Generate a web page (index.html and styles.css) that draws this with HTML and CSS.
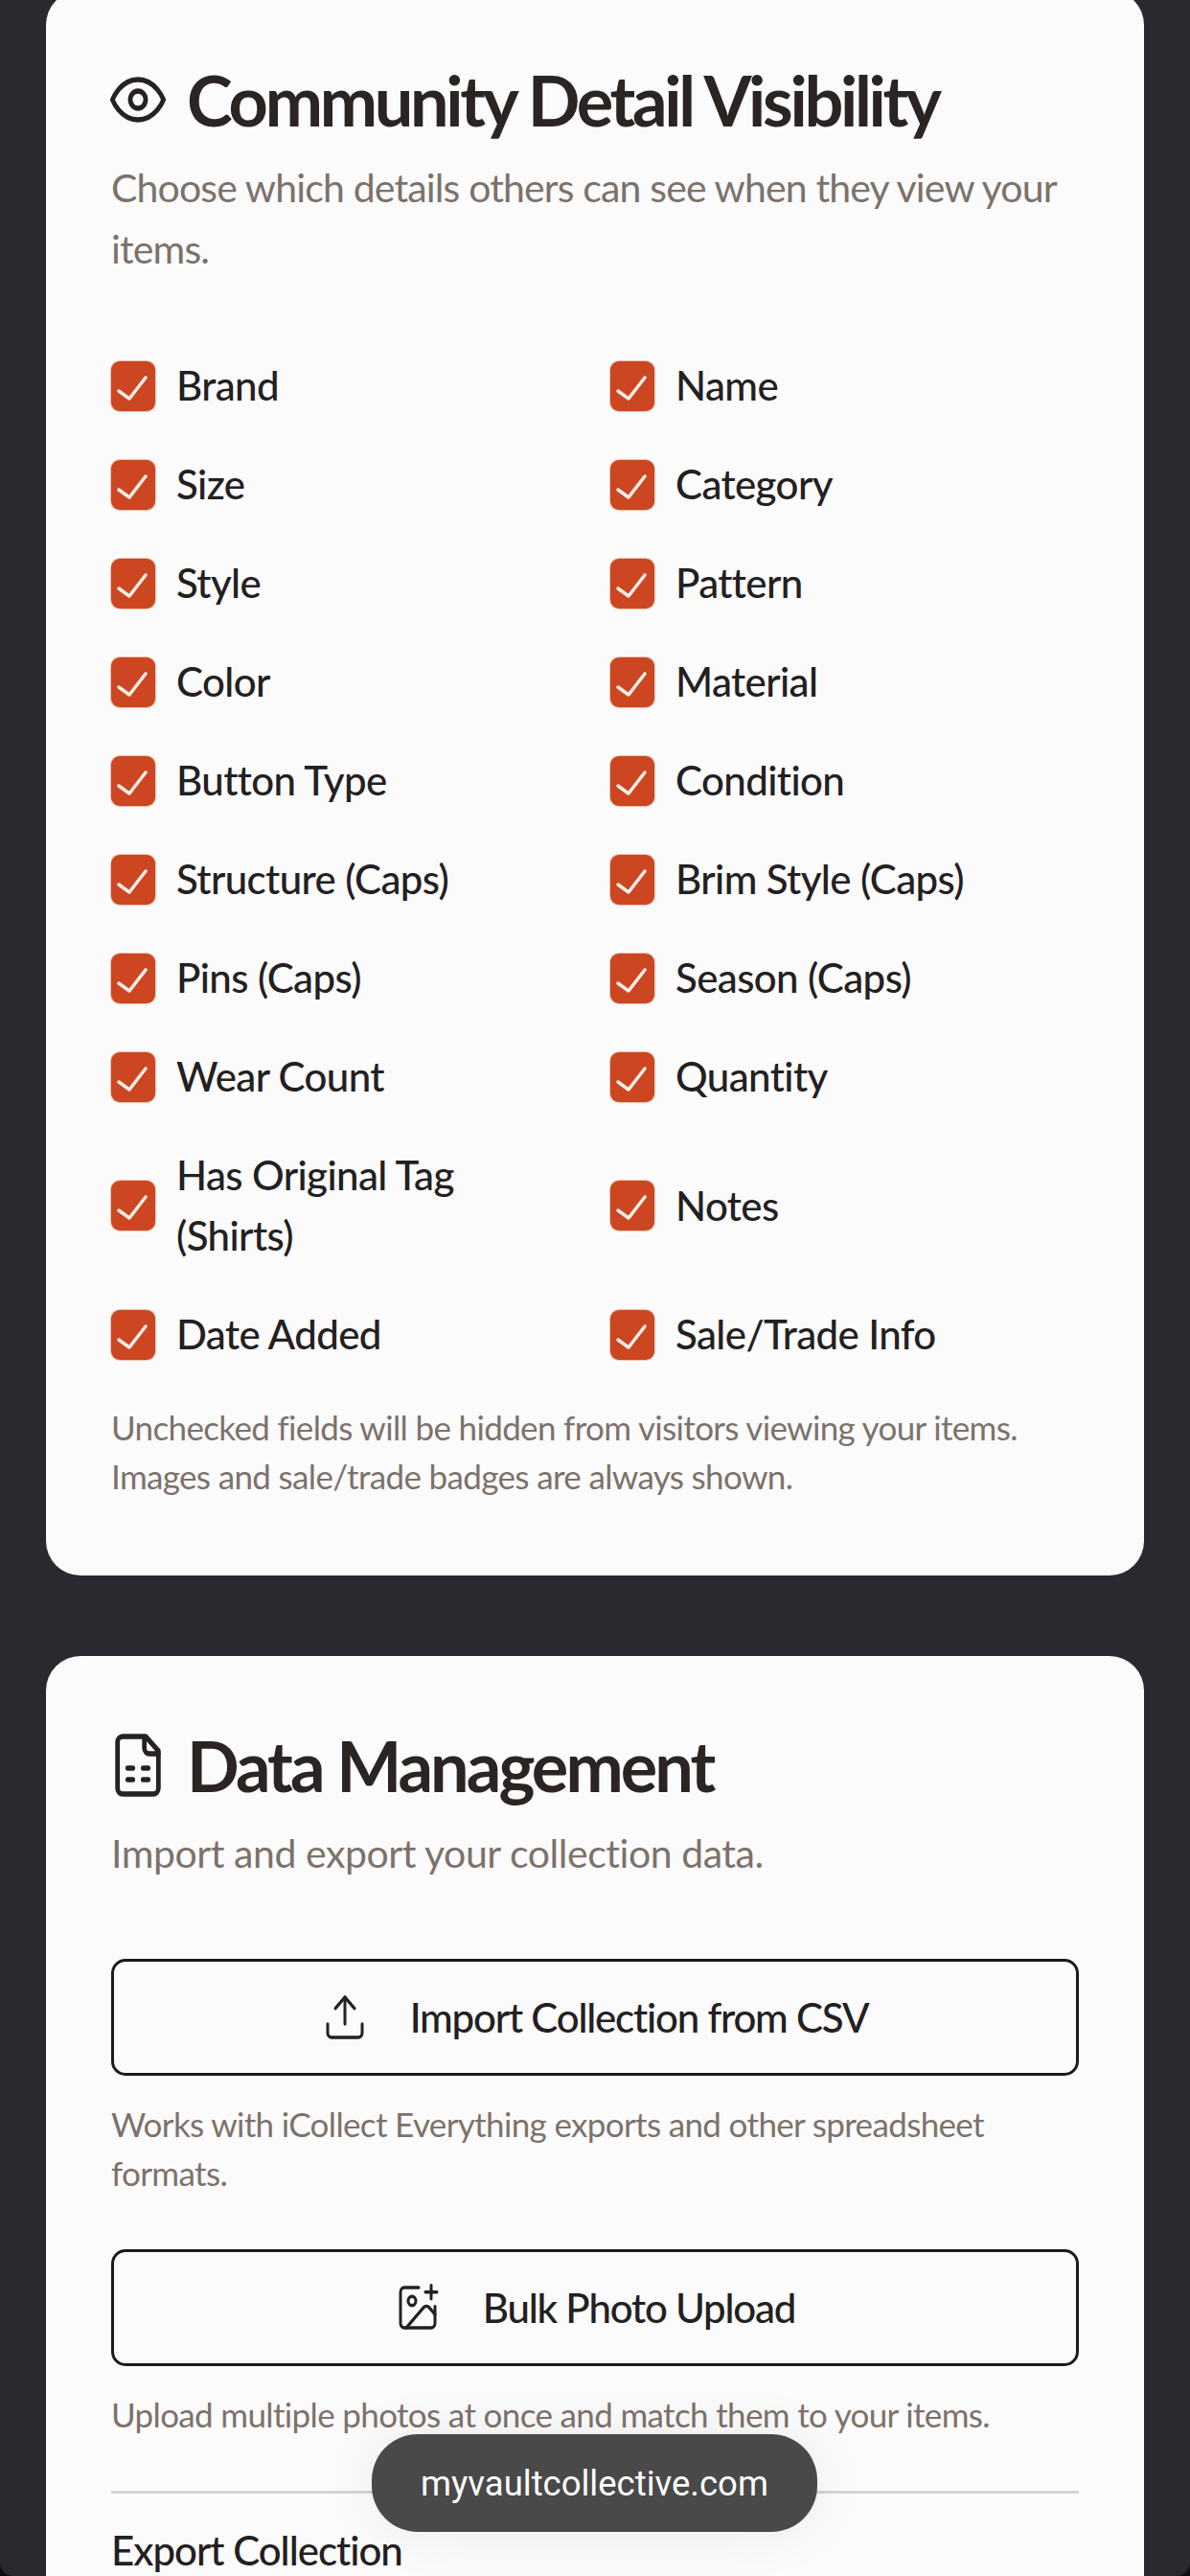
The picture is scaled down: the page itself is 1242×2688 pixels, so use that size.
FILE: index.html
```html
<!DOCTYPE html>
<html lang="en">
<head>
<meta charset="utf-8">
<title>Settings</title>
<link rel="stylesheet" href="styles.css">
</head>
<body>
<main class="page">
  <section class="card card-first">
    <h2 class="card-title">
      <svg class="title-icon" viewBox="0 0 24 24" preserveAspectRatio="none"><path d="M2 12s3-7 10-7 10 7 10 7-3 7-10 7-10-7-10-7Z"/><circle cx="12" cy="12" r="3"/></svg>
      <span>Community Detail Visibility</span>
    </h2>
    <p class="card-sub">Choose which details others can see when they view your items.</p>
    <div class="check-grid">
      <label class="check"><span class="box"><svg viewBox="0 0 46 52"><path d="M8 31l11 8 17-22"/></svg></span><span class="check-text">Brand</span></label>
      <label class="check"><span class="box"><svg viewBox="0 0 46 52"><path d="M8 31l11 8 17-22"/></svg></span><span class="check-text">Name</span></label>
      <label class="check"><span class="box"><svg viewBox="0 0 46 52"><path d="M8 31l11 8 17-22"/></svg></span><span class="check-text">Size</span></label>
      <label class="check"><span class="box"><svg viewBox="0 0 46 52"><path d="M8 31l11 8 17-22"/></svg></span><span class="check-text">Category</span></label>
      <label class="check"><span class="box"><svg viewBox="0 0 46 52"><path d="M8 31l11 8 17-22"/></svg></span><span class="check-text">Style</span></label>
      <label class="check"><span class="box"><svg viewBox="0 0 46 52"><path d="M8 31l11 8 17-22"/></svg></span><span class="check-text">Pattern</span></label>
      <label class="check"><span class="box"><svg viewBox="0 0 46 52"><path d="M8 31l11 8 17-22"/></svg></span><span class="check-text">Color</span></label>
      <label class="check"><span class="box"><svg viewBox="0 0 46 52"><path d="M8 31l11 8 17-22"/></svg></span><span class="check-text">Material</span></label>
      <label class="check"><span class="box"><svg viewBox="0 0 46 52"><path d="M8 31l11 8 17-22"/></svg></span><span class="check-text">Button Type</span></label>
      <label class="check"><span class="box"><svg viewBox="0 0 46 52"><path d="M8 31l11 8 17-22"/></svg></span><span class="check-text">Condition</span></label>
      <label class="check"><span class="box"><svg viewBox="0 0 46 52"><path d="M8 31l11 8 17-22"/></svg></span><span class="check-text">Structure (Caps)</span></label>
      <label class="check"><span class="box"><svg viewBox="0 0 46 52"><path d="M8 31l11 8 17-22"/></svg></span><span class="check-text">Brim Style (Caps)</span></label>
      <label class="check"><span class="box"><svg viewBox="0 0 46 52"><path d="M8 31l11 8 17-22"/></svg></span><span class="check-text">Pins (Caps)</span></label>
      <label class="check"><span class="box"><svg viewBox="0 0 46 52"><path d="M8 31l11 8 17-22"/></svg></span><span class="check-text">Season (Caps)</span></label>
      <label class="check"><span class="box"><svg viewBox="0 0 46 52"><path d="M8 31l11 8 17-22"/></svg></span><span class="check-text">Wear Count</span></label>
      <label class="check"><span class="box"><svg viewBox="0 0 46 52"><path d="M8 31l11 8 17-22"/></svg></span><span class="check-text">Quantity</span></label>
      <label class="check"><span class="box"><svg viewBox="0 0 46 52"><path d="M8 31l11 8 17-22"/></svg></span><span class="check-text">Has Original Tag<br>(Shirts)</span></label>
      <label class="check"><span class="box"><svg viewBox="0 0 46 52"><path d="M8 31l11 8 17-22"/></svg></span><span class="check-text">Notes</span></label>
      <label class="check"><span class="box"><svg viewBox="0 0 46 52"><path d="M8 31l11 8 17-22"/></svg></span><span class="check-text">Date Added</span></label>
      <label class="check"><span class="box"><svg viewBox="0 0 46 52"><path d="M8 31l11 8 17-22"/></svg></span><span class="check-text">Sale/Trade Info</span></label>
    </div>
    <p class="hint hint-note">Unchecked fields will be hidden from visitors viewing your items. Images and sale/trade badges are always shown.</p>
  </section>

  <section class="card">
    <h2 class="card-title">
      <svg class="title-icon" viewBox="0 0 24 24" preserveAspectRatio="none"><path d="M15 2H6a2 2 0 0 0-2 2v16a2 2 0 0 0 2 2h12a2 2 0 0 0 2-2V7Z"/><path d="M14.500 2.500v3.500a2 2 0 0 0 2 2h3.500"/><path d="M8 13h2M14 13h2M8 17h2M14 17h2"/></svg>
      <span>Data Management</span>
    </h2>
    <p class="card-sub">Import and export your collection data.</p>
    <button class="action" type="button">
      <svg class="action-icon" viewBox="0 0 24 24" preserveAspectRatio="none"><path d="M21 15v4a2 2 0 0 1-2 2H5a2 2 0 0 1-2-2v-4"/><path d="M17 8l-5-5-5 5"/><path d="M12 3v12"/></svg>
      <span>Import Collection from CSV</span>
    </button>
    <p class="hint hint-import">Works with iCollect Everything exports and other spreadsheet formats.</p>
    <button class="action" type="button">
      <svg class="action-icon" viewBox="0 0 24 24" preserveAspectRatio="none"><path d="M16 5h6"/><path d="M19 2v6"/><path d="M21 11.500V19a2 2 0 0 1-2 2H5a2 2 0 0 1-2-2V5a2 2 0 0 1 2-2h7.500"/><path d="M21 15l-3.086-3.086a2 2 0 0 0-2.828 0L6 21"/><circle cx="9" cy="9" r="2"/></svg>
      <span>Bulk Photo Upload</span>
    </button>
    <p class="hint hint-upload">Upload multiple photos at once and match them to your items.</p>
    <hr class="divider">
    <h3 class="export-title">Export Collection</h3>
  </section>
</main>
<div class="url-pill">myvaultcollective.com</div>
</body>
</html>
```
FILE: styles.css
```css
* { box-sizing: border-box; }
html { background: #0e0e10; }
html, body { margin: 0; height: 2688px; overflow: hidden; }
body {
  position: relative;
  background: #29292f;
  border-radius: 0 0 14px 14px;
  font-family: "Lato", "Noto Sans", sans-serif;
  color: #262221;
}
.page {
  display: flex;
  flex-direction: column;
  gap: 84px;
  padding: 0 48px;
  margin-top: -10px;
}
.card {
  background: #fcfbfc;
  border-radius: 36px;
  padding: 68px 68px 78px;
}
.card-title {
  display: flex;
  align-items: center;
  gap: 19px;
  margin: 0 0 14px -4px;
  height: 92px;
  font-size: 72px;
  font-weight: 700;
  letter-spacing: -2.900px;
  color: #2a2523;
  white-space: nowrap;
}
.card-first .card-title { letter-spacing: -3.300px; }
.title-icon {
  width: 64px;
  height: 72px;
  flex: none;
  fill: none;
  stroke: #262221;
  stroke-width: 1.800;
  stroke-linecap: round;
  stroke-linejoin: round;
}
.card-sub {
  margin: 0 0 78px;
  font-size: 41px;
  letter-spacing: -0.450px;
  line-height: 64px;
  color: #7c726b;
}
.card-first .card-sub {
  margin-bottom: 79px;
  letter-spacing: -0.850px;
}
.check-grid {
  display: grid;
  grid-template-columns: 489px 489px;
  column-gap: 32px;
  row-gap: 40px;
}
.check {
  display: flex;
  align-items: center;
  gap: 22px;
}
.box {
  width: 46px;
  height: 52px;
  flex: none;
  border-radius: 9px;
  background: #cc4622;
  box-shadow: 0 0 0 1px #f3c6b2;
}
.box svg {
  display: block;
  width: 46px;
  height: 52px;
  fill: none;
  stroke: #fdeee6;
  stroke-width: 3.500;
  stroke-linecap: round;
  stroke-linejoin: round;
}
.check-text {
  font-size: 42px;
  letter-spacing: -0.600px;
  line-height: 63px;
  font-weight: 500;
  color: #232021;
}
.hint {
  margin: 0;
  font-size: 35px;
  letter-spacing: -0.650px;
  line-height: 51px;
  color: #7c726b;
}
.hint-note { margin-top: 40px; }
.hint-import { margin: 25px 0 54px; }
.hint-upload { margin-top: 25px; }
.action {
  display: flex;
  align-items: center;
  justify-content: center;
  gap: 44px;
  width: 100%;
  height: 122px;
  background: transparent;
  border: 3px solid #1c1a1a;
  border-radius: 15px;
  font-family: inherit;
  font-size: 42px;
  letter-spacing: -1.200px;
  font-weight: 500;
  color: #232021;
}
.action-icon {
  width: 48px;
  height: 56px;
  flex: none;
  fill: none;
  stroke: #232021;
  stroke-width: 1.500;
  stroke-linecap: round;
  stroke-linejoin: round;
}
.divider {
  margin: 54px 0 28px;
  height: 3px;
  border: 0;
  background: #d8d5d0;
}
.export-title {
  margin: 0;
  font-size: 42px;
  letter-spacing: -1px;
  line-height: 63px;
  font-weight: 500;
  color: #232021;
}
.url-pill {
  position: absolute;
  left: 388px;
  top: 2540px;
  width: 465px;
  height: 102px;
  display: flex;
  align-items: center;
  justify-content: center;
  border-radius: 48px;
  background: #4a4949;
  box-shadow: 0 0 60px rgba(0, 0, 0, 0.07);
  font-family: "Roboto", "Liberation Sans", sans-serif;
  font-size: 36.500px;
  color: #fff;
}
```
